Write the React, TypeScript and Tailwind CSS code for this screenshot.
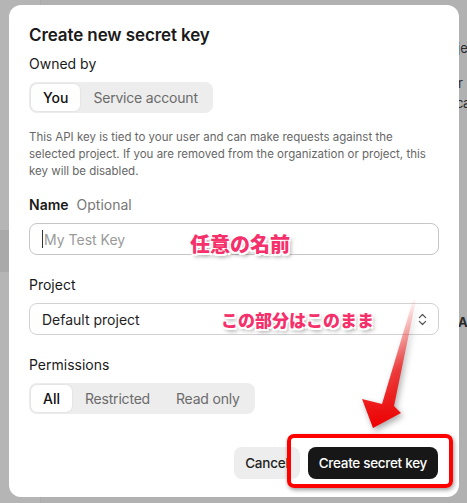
import { ChevronsUpDown } from 'lucide-react';

const noteText =
  "font-['Noto_Sans_CJK_JP',sans-serif] font-black leading-none text-[#f5306b] [text-shadow:-1.5px_-1.5px_0_#fff,1.5px_-1.5px_0_#fff,-1.5px_1.5px_0_#fff,1.5px_1.5px_0_#fff,0_0_2px_#fff,2px_3px_4px_rgba(0,0,0,0.45)]";

function Segmented({ items }: { items: string[] }) {
  return (
    <div className="inline-flex self-start p-[2px] rounded-[8px] bg-[#ededed]">
      {items.map((label, i) => (
        <div
          key={label}
          className={
            i === 0
              ? 'h-[27px] px-[12px] flex items-center rounded-[6px] bg-white shadow-[0_0_2px_rgba(0,0,0,0.12)] text-[14px] font-medium text-[#111]'
              : 'h-[27px] px-[13px] flex items-center text-[14px] tracking-[-0.2px] text-[#6b6b6b]'
          }
        >
          {label}
        </div>
      ))}
    </div>
  );
}

export default function App() {
  return (
    <div className="relative w-[467px] h-[503px] overflow-hidden bg-[#b1b1b1] font-['Inter',sans-serif]">
      {/* dimmed page behind the dialog */}
      <div className="flex h-full">
        <div className="w-[41px] h-full flex flex-col bg-[#b5b5b5] border-r border-[#ababab]">
          <div className="h-[230px]" />
          <div className="h-[42px] bg-[#a9a9a9]" />
        </div>
        <div className="flex-1 flex flex-col items-end text-[13px] text-[#2a2a2a]">
          <div className="w-[9px] pt-[38px] flex flex-col">
            <span className="leading-[20px] -ml-[1px]">je</span>
            <span className="mt-[15px] leading-[20px]">r</span>
            <span className="leading-[20px] -ml-[2px] tracking-[-0.5px]">ca</span>
            <span className="mt-[199px] leading-[20px] font-bold tracking-[-0.5px]">Al</span>
          </div>
        </div>
      </div>

      {/* dialog */}
      <div className="absolute left-[9px] top-[5px] w-[450px] h-[492px] bg-white rounded-xl flex flex-col px-[20px] pt-[18px] text-[#1a1a1a]">
        <h2 className="text-[17px] leading-[24px] font-semibold tracking-[-0.1px]">Create new secret key</h2>
        <div className="mt-[7px] text-[14px] leading-[20px]">Owned by</div>
        <div className="mt-[8px] flex">
          <Segmented items={['You', 'Service account']} />
        </div>
        <p className="mt-[16px] text-[11.5px] leading-[17px] text-[#676767] whitespace-nowrap">
          This API key is tied to your user and can make requests against the
          <br />
          selected project. If you are removed from the organization or project, this
          <br />
          key will be disabled.
        </p>
        <div className="mt-[15px] flex items-center gap-[8px] text-[14px] leading-[20px]">
          <span className="font-semibold">Name</span>
          <span className="text-[#777]">Optional</span>
        </div>
        <div className="mt-[8px] h-[32px] flex items-center px-[12px] border border-[#c6c6c6] rounded-[8px] text-[14px]">
          <span className="w-px h-[18px] bg-[#333]" />
          <span className="ml-[1px] text-[#9a9a9a]">My Test Key</span>
        </div>
        <div className="mt-[20px] text-[14px] leading-[20px]">Project</div>
        <div className="mt-[8px] h-[32px] flex items-center justify-between pl-[12px] pr-[8px] border border-[#d2d2d2] rounded-[8px] text-[14px] text-[#1f1f1f]">
          <span>Default project</span>
          <ChevronsUpDown size={15} strokeWidth={2} className="text-[#555]" />
        </div>
        <div className="mt-[20px] text-[14px] leading-[20px]">Permissions</div>
        <div className="mt-[8px] flex">
          <Segmented items={['All', 'Restricted', 'Read only']} />
        </div>
        <div className="mt-[33px] flex justify-end gap-[8px] pr-[1px]">
          <button className="h-[32px] px-[11px] rounded-[8px] bg-[#ededed] text-[13.5px] tracking-[-0.2px] font-medium text-[#1f1f1f]">
            Cancel
          </button>
          <button className="h-[32px] px-[11px] rounded-[8px] bg-[#171717] text-[13.5px] tracking-[-0.3px] font-medium text-white">
            Create secret key
          </button>
        </div>
      </div>

      {/* annotations drawn over the screenshot */}
      <span className={`absolute left-[190px] top-[234px] text-[20px] ${noteText}`}>任意の名前</span>
      <span className={`absolute left-[221px] top-[311px] text-[17px] ${noteText}`}>この部分はこのまま</span>
      <svg
        className="absolute left-[350px] top-[295px] drop-shadow-[2px_3px_3px_rgba(0,0,0,0.35)]"
        width="75"
        height="140"
        viewBox="0 0 75 140"
      >
        <defs>
          <linearGradient id="arrowFill" x1="0" y1="0" x2="0" y2="1">
            <stop offset="0" stopColor="#ff4a4a" stopOpacity="0.05" />
            <stop offset="0.55" stopColor="#f02020" stopOpacity="0.85" />
            <stop offset="1" stopColor="#ee0000" />
          </linearGradient>
        </defs>
        <polygon points="63,5 66,5 44,111 51,118 23,133 12,104 32,109" fill="url(#arrowFill)" />
      </svg>
      <div className="absolute left-[287px] top-[434px] w-[166px] h-[54px] border-[4px] border-[#ff0000] rounded-[7px] shadow-[1px_2px_4px_rgba(0,0,0,0.4)]" />
    </div>
  );
}
